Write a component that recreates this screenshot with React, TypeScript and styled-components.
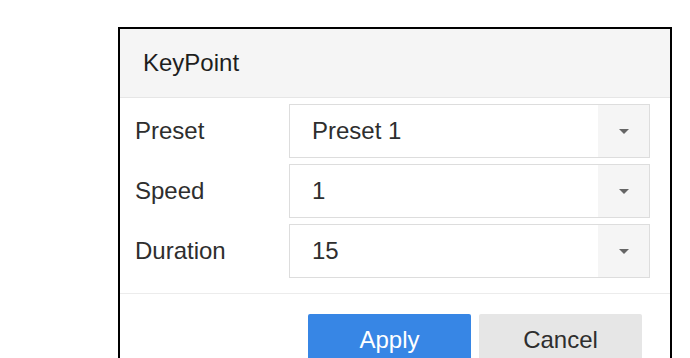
import React from "react"
import styled, { createGlobalStyle } from "styled-components"

const GlobalStyle = createGlobalStyle`
  html, body {
    margin: 0;
    padding: 0;
    background: #ffffff;
    overflow: hidden;
  }
  body {
    font-family: "Liberation Sans", Arial, sans-serif;
    color: #333333;
  }
`

const Page = styled.div`
  width: 690px;
  height: 358px;
  padding: 27px 0 0 118px;
  box-sizing: border-box;
  overflow: hidden;
`

const Dialog = styled.div`
  width: 554px;
  border: 2px solid #000000;
  background: #ffffff;
  box-sizing: border-box;
`

const Header = styled.div`
  height: 68px;
  display: flex;
  align-items: center;
  padding-left: 23px;
  background: #f5f5f5;
  border-bottom: 1px solid #e6e6e6;
  font-size: 24px;
  color: #1e1e1e;
`

const Body = styled.div`
  display: flex;
  flex-direction: column;
  gap: 6px;
  padding: 6px 20px 15px 15px;
  border-bottom: 1px solid #ececec;
`

const Row = styled.div`
  display: flex;
  align-items: center;
  height: 54px;
`

const Label = styled.div`
  width: 154px;
  font-size: 24px;
  color: #2e2e2e;
`

const Select = styled.div`
  flex: 1;
  height: 54px;
  display: flex;
  border: 1px solid #dddddd;
  box-sizing: border-box;
`

const Value = styled.div`
  flex: 1;
  display: flex;
  align-items: center;
  padding-left: 22px;
  font-size: 24px;
  color: #2e2e2e;
`

const Arrow = styled.div`
  width: 51px;
  display: flex;
  align-items: center;
  justify-content: center;
  background: #f5f5f5;

  &::after {
    content: "";
    border-left: 5px solid transparent;
    border-right: 5px solid transparent;
    border-top: 5px solid #666666;
  }
`

const Footer = styled.div`
  display: flex;
  justify-content: flex-end;
  gap: 8px;
  padding: 20px 28px 20px 0;
`

const Button = styled.button<{ $primary?: boolean }>`
  width: 163px;
  height: 52px;
  padding: 0;
  border: none;
  border-radius: 2px;
  font-family: "Liberation Sans", Arial, sans-serif;
  font-size: 24px;
  background: ${(p) => (p.$primary ? "#3786e5" : "#e6e6e6")};
  color: ${(p) => (p.$primary ? "#ffffff" : "#2e2e2e")};
`

const fields = [
  { label: "Preset", value: "Preset 1" },
  { label: "Speed", value: "1" },
  { label: "Duration", value: "15" },
]

const App: React.FC = () => (
  <Page>
    <GlobalStyle />
    <Dialog>
      <Header>KeyPoint</Header>
      <Body>
        {fields.map((f) => (
          <Row key={f.label}>
            <Label>{f.label}</Label>
            <Select>
              <Value>{f.value}</Value>
              <Arrow />
            </Select>
          </Row>
        ))}
      </Body>
      <Footer>
        <Button $primary>Apply</Button>
        <Button>Cancel</Button>
      </Footer>
    </Dialog>
  </Page>
)

export default App
